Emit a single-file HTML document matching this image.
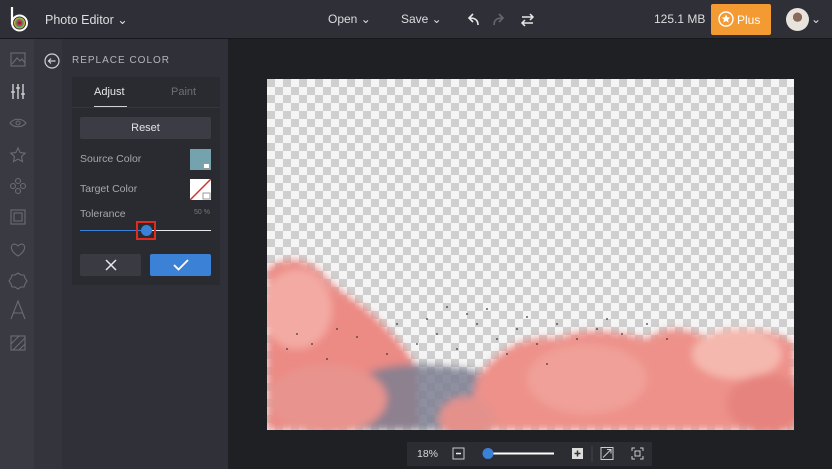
<!DOCTYPE html>
<html><head><meta charset="utf-8"><style>
*{box-sizing:border-box;margin:0;padding:0}
body{width:832px;height:469px;overflow:hidden;background:#1f2024;font-family:"Liberation Sans",sans-serif;position:relative}
.top{position:absolute;left:0;top:0;width:832px;height:39px;background:#2f3037;border-bottom:1px solid #18191c}
.t{position:absolute;color:#dcdde0;font-size:12px;top:12px}
.rail{position:absolute;left:0;top:39px;width:34px;height:430px;background:#3a3b42}
.strip{position:absolute;left:34px;top:39px;width:28px;height:430px;background:#34353c}
.panel{position:absolute;left:62px;top:39px;width:166px;height:430px;background:#303138}
.card{position:absolute;left:72px;top:77px;width:148px;height:208px;background:#2a2b31}
.lbl{position:absolute;color:#a6a7ad;font-size:10.5px}
.check{position:absolute;left:267px;top:79px;width:527px;height:351px;background-color:#f5f5f5;background-image:linear-gradient(45deg,#cfcfcf 25%,transparent 25%,transparent 75%,#cfcfcf 75%),linear-gradient(45deg,#cfcfcf 25%,transparent 25%,transparent 75%,#cfcfcf 75%);background-size:16px 16px;background-position:8px 0,0 8px;overflow:hidden}
</style></head><body>
<div class="top">
 <svg style="position:absolute;left:9px;top:6px" width="20" height="26" viewBox="0 0 20 26"><path d="M3 1v17" stroke="#fff" stroke-width="2.2"/><circle cx="10.5" cy="17" r="7.5" fill="none" stroke="#fff" stroke-width="2"/><circle cx="10.5" cy="17" r="5.5" fill="url(#g)"/><defs><radialGradient id="g"><stop offset="0" stop-color="#333"/><stop offset=".4" stop-color="#e24"/><stop offset=".7" stop-color="#3a6"/><stop offset="1" stop-color="#fb3"/></radialGradient></defs></svg>
 <div class="t" style="left:45px;font-size:12.5px">Photo Editor ⌄</div>
 <div class="t" style="left:328px">Open ⌄</div>
 <div class="t" style="left:401px">Save ⌄</div>
 <svg style="position:absolute;left:466px;top:12px" width="70" height="16" viewBox="0 0 70 16"><path d="M12 13c0-5-3-7-8-7M7 2L3 6l4 4" fill="none" stroke="#e8e8ea" stroke-width="1.6"/><path d="M28 13c0-5 3-7 8-7M33 2l4 4-4 4" fill="none" stroke="#66676c" stroke-width="1.6"/><path d="M56 5h11M64 2l3 3-3 3M67 11H56M59 8l-3 3 3 3" fill="none" stroke="#e8e8ea" stroke-width="1.5"/></svg>
 <div class="t" style="left:654px">125.1 MB</div>
 <div style="position:absolute;left:711px;top:4px;width:60px;height:31px;background:#f39a32;border-radius:2px;color:#fff;font-size:12px;padding:9px 0 0 26px">Plus
  <svg style="position:absolute;left:7px;top:7px" width="16" height="16" viewBox="0 0 16 16"><circle cx="8" cy="8" r="7" fill="none" stroke="#fff" stroke-width="1.4"/><path d="M8 3.5l1.3 2.8 3 .3-2.3 2 .7 3L8 10l-2.7 1.6.7-3-2.3-2 3-.3z" fill="#fff"/></svg></div>
 <div style="position:absolute;left:786px;top:8px;width:23px;height:23px;border-radius:50%;background:radial-gradient(circle at 50% 40%,#8a6a5a 0 25%,#e9e3de 26%)"></div>
 <div class="t" style="left:811px">⌄</div>
</div>
<div class="rail"></div><div class="strip"></div><div class="panel"></div>
<svg style="position:absolute;left:0;top:39px" width="34" height="320" viewBox="0 0 34 320" fill="none" stroke="#6b6c73" stroke-width="1.1">
 <rect x="11" y="14" width="14" height="13"/><path d="M12 25l5-6 3 3 2-2 3 4"/>
 <g stroke="#d8d9dc" stroke-width="1.3"><path d="M13 45v15M18 45v15M23 45v15"/><path d="M11 53h4M16 49h4M21 55h4"/></g>
 <path d="M10 84c4-5 12-5 16 0-4 5-12 5-16 0z"/><circle cx="18" cy="84" r="2"/>
 <path d="M18 109l2.2 4.6 5 .6-3.7 3.4 1 5-4.5-2.5-4.5 2.5 1-5-3.7-3.4 5-.6z"/>
 <circle cx="18" cy="142" r="2.5"/><circle cx="18" cy="152" r="2.5"/><circle cx="13" cy="147" r="2.5"/><circle cx="23" cy="147" r="2.5"/>
 <rect x="11" y="171" width="14" height="14"/><rect x="14" y="174" width="8" height="8"/>
 <path d="M18 217c-8-5-8-11-4-12 2 0 4 2 4 2s2-2 4-2c4 1 4 7-4 12z"/>
 <path d="M18 234l3 2 3 0 1 3 2 3-2 3-1 3-3 0-3 2-3-2-3 0-1-3-2-3 2-3 1-3 3 0z"/>
 <path d="M11 280l7-18 7 18M13.5 274h9"/>
 <rect x="11" y="297" width="14" height="14"/><path d="M11 305l8-8M13 311l12-12M19 311l6-6"/>
</svg>
<svg style="position:absolute;left:44px;top:53px" width="16" height="16" viewBox="0 0 16 16"><circle cx="8" cy="8" r="7" fill="none" stroke="#d0d1d4" stroke-width="1.2"/><path d="M11.5 8h-7M7 5.5L4.5 8 7 10.5" fill="none" stroke="#d0d1d4" stroke-width="1.2"/></svg>
<div class="lbl" style="left:72px;top:55px;letter-spacing:1px;font-size:10px;color:#b4b5ba">REPLACE COLOR</div>
<div class="card"></div>
<div class="lbl" style="left:94px;top:86px;color:#e8e8ea;font-size:11px">Adjust</div>
<div class="lbl" style="left:171px;top:86px;color:#6e6f75;font-size:11px">Paint</div>
<div style="position:absolute;left:94px;top:106px;width:33px;height:1px;background:#d0d1d4"></div>
<div style="position:absolute;left:72px;top:107px;width:148px;height:1px;background:#35363c"></div>
<div style="position:absolute;left:80px;top:117px;width:131px;height:22px;background:#3c3d44;border-radius:2px;color:#e2e3e6;font-size:11px;text-align:center;line-height:22px">Reset</div>
<div class="lbl" style="left:80px;top:153px">Source Color</div>
<div style="position:absolute;left:190px;top:149px;width:21px;height:21px;background:#75a3ad"></div>
<div style="position:absolute;left:203px;top:163px;width:7px;height:6px;background:#fff;border:1px solid #999"></div>
<div class="lbl" style="left:80px;top:183px">Target Color</div>
<svg style="position:absolute;left:190px;top:179px" width="21" height="21"><rect width="21" height="21" fill="#fff"/><path d="M0 21L21 0" stroke="#d2322a" stroke-width="1.5"/><rect x="13" y="14" width="7" height="6" fill="#fff" stroke="#999"/></svg>
<div class="lbl" style="left:80px;top:208px">Tolerance</div>
<div class="lbl" style="left:194px;top:209px;font-size:7px;color:#77787e">50 %</div>
<div style="position:absolute;left:80px;top:230px;width:66px;height:1px;background:#3b82d6"></div>
<div style="position:absolute;left:146px;top:230px;width:65px;height:1px;background:#e8e8ea"></div>
<div style="position:absolute;left:136px;top:221px;width:20px;height:19px;border:2px solid #e02b20"></div>
<div style="position:absolute;left:141px;top:225px;width:11px;height:11px;border-radius:50%;background:#3b82d6"></div>
<div style="position:absolute;left:80px;top:254px;width:61px;height:22px;background:#3a3b42;border-radius:2px"></div>
<svg style="position:absolute;left:105px;top:259px" width="12" height="12"><path d="M1 1l10 10M11 1L1 11" stroke="#e8e8ea" stroke-width="1.5"/></svg>
<div style="position:absolute;left:150px;top:254px;width:61px;height:22px;background:#3b82d6;border-radius:2px"></div>
<svg style="position:absolute;left:173px;top:259px" width="16" height="12"><path d="M1 6l4.5 4.5L15 1" fill="none" stroke="#fff" stroke-width="1.8"/></svg>
<div class="check">
<svg width="527" height="351" viewBox="0 0 527 351"><defs><filter id="b" x="-20%" y="-20%" width="140%" height="140%"><feGaussianBlur stdDeviation="4"/></filter></defs>
<g filter="url(#b)">
<path d="M0 190 C20 175 45 180 60 200 C75 215 95 225 110 240 C125 255 140 270 150 290 L150 351 L0 351Z" fill="#ec8a84"/>
<ellipse cx="30" cy="230" rx="35" ry="40" fill="#f3aaa3"/>
<path d="M90 300 C120 280 160 285 200 290 C240 300 260 300 280 320 L280 351 L70 351Z" fill="#7d7e90" opacity=".85"/>
<path d="M210 300 C230 270 260 255 290 260 C320 245 360 255 380 260 C400 245 420 250 440 258 C470 245 510 250 527 265 L527 351 L200 351Z" fill="#ee918a"/>
<ellipse cx="470" cy="275" rx="45" ry="25" fill="#f5b8ae"/>
<ellipse cx="320" cy="300" rx="60" ry="35" fill="#f0a098"/>
<ellipse cx="200" cy="340" rx="28" ry="22" fill="#e4918c"/>
<ellipse cx="500" cy="325" rx="40" ry="30" fill="#e6837e"/>
<ellipse cx="60" cy="320" rx="60" ry="35" fill="#e8938d"/>
</g>
<g fill="#3a3235"><circle cx="30" cy="255" r=".9"/><circle cx="45" cy="265" r=".9"/><circle cx="20" cy="270" r=".9"/><circle cx="70" cy="250" r=".9"/><circle cx="90" cy="258" r=".9"/><circle cx="130" cy="245" r=".9"/><circle cx="150" cy="265" r=".9"/><circle cx="170" cy="255" r=".9"/><circle cx="190" cy="270" r=".9"/><circle cx="210" cy="245" r=".9"/><circle cx="230" cy="260" r=".9"/><circle cx="250" cy="250" r=".9"/><circle cx="270" cy="265" r=".9"/><circle cx="290" cy="245" r=".9"/><circle cx="310" cy="260" r=".9"/><circle cx="330" cy="250" r=".9"/><circle cx="355" cy="255" r=".9"/><circle cx="380" cy="245" r=".9"/><circle cx="400" cy="260" r=".9"/><circle cx="160" cy="240" r=".9"/><circle cx="120" cy="275" r=".9"/><circle cx="60" cy="280" r=".9"/><circle cx="280" cy="285" r=".9"/><circle cx="240" cy="275" r=".9"/><circle cx="200" cy="235" r=".9"/><circle cx="220" cy="230" r=".9"/><circle cx="180" cy="228" r=".9"/><circle cx="260" cy="238" r=".9"/><circle cx="340" cy="240" r=".9"/></g>
</svg></div>
<div style="position:absolute;left:407px;top:442px;width:245px;height:24px;background:#2c2d33"></div>
<div style="position:absolute;left:417px;top:448px;color:#d8d9dc;font-size:10.5px">18%</div>
<svg style="position:absolute;left:452px;top:446px" width="200" height="16"><rect x="1" y="2" width="11" height="11" fill="none" stroke="#ccc"/><path d="M4 7.5h5" stroke="#eee" stroke-width="1.5"/><path d="M36 7.5h66" stroke="#fff" stroke-width="2"/><circle cx="36" cy="7.5" r="5.5" fill="#3b82d6"/><rect x="120" y="2" width="11" height="11" fill="#ddd"/><path d="M122.5 7.5h6M125.5 4.5v6" stroke="#333" stroke-width="1.5"/><path d="M140 0v16" stroke="#44454b"/><rect x="149" y="1.5" width="12" height="12" fill="none" stroke="#ccc"/><path d="M151 11.5l8-8M155 3.5h4v4" stroke="#ccc" fill="none"/><path d="M180 5V2h3M188 2h3v3M191 10v3h-3M183 13h-3v-3" stroke="#ccc" fill="none"/><rect x="183" y="5" width="5" height="5" fill="none" stroke="#ccc"/></svg>
</body></html>
